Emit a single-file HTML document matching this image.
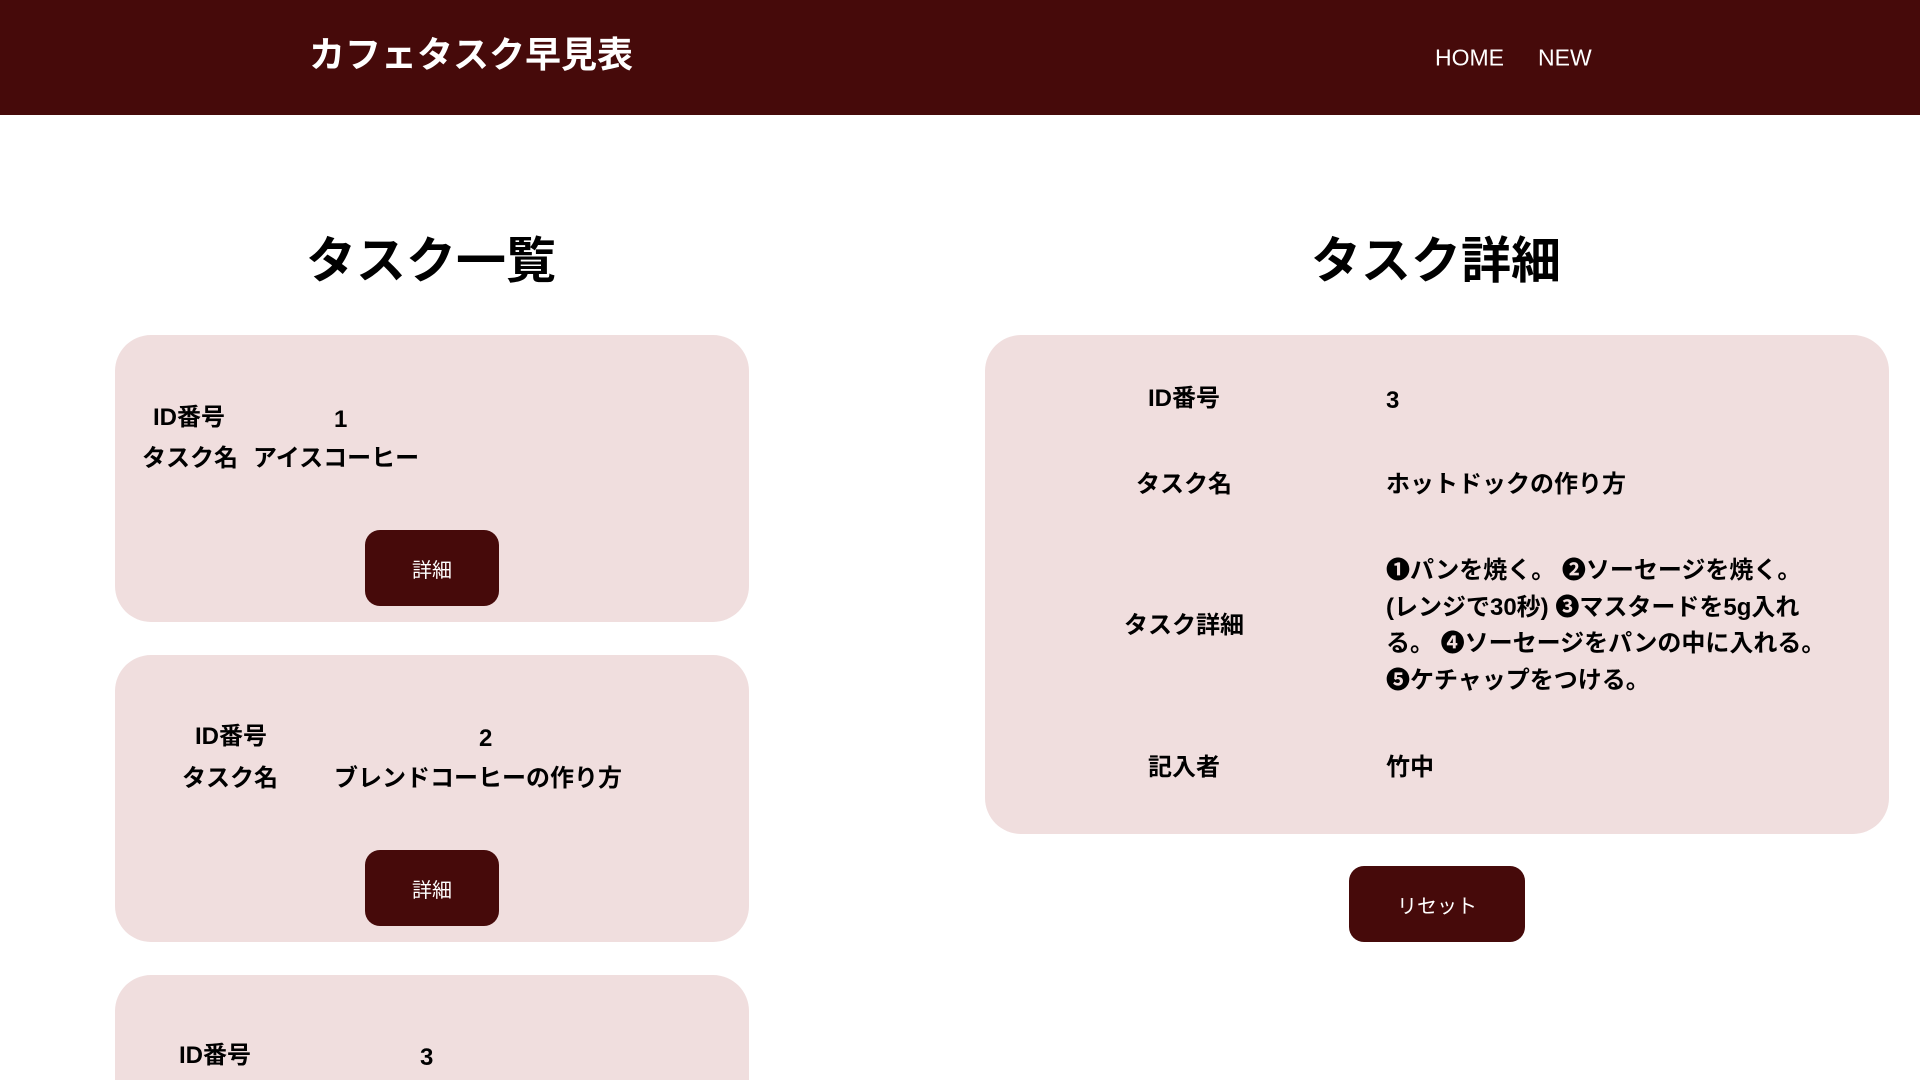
<!DOCTYPE html>
<html><head><meta charset="utf-8"><style>
*{margin:0;padding:0;box-sizing:border-box}
html,body{width:1920px;height:1080px;overflow:hidden}
body{background:#fff;font-family:"Liberation Sans","Noto Sans CJK JP",sans-serif;color:#000;position:relative}
.hdr{position:absolute;left:0;top:0;width:1920px;height:115px;background:#460a0a}
.t{position:absolute;white-space:nowrap;line-height:1}
.card{position:absolute;background:#f0dede;border-radius:36px}
.btn{position:absolute;background:#460a0a;border-radius:15px;color:#fff;font-size:20px;display:flex;align-items:center;justify-content:center}
.b{font-weight:bold;font-size:24px}
.c{transform:translate(-50%,-50%)}
.l{transform:translateY(-50%)}
</style></head><body>
<div class="hdr"></div>
<div class="t l" style="left:309px;top:55px;color:#fff;font-size:36px;font-weight:bold">カフェタスク早見表</div>
<div class="t l" style="left:1435px;top:58px;color:#fff;font-size:23px">HOME</div>
<div class="t l" style="left:1538px;top:58px;color:#fff;font-size:23px">NEW</div>

<div class="t c" style="left:431px;top:261px;font-size:50px;font-weight:bold">タスク一覧</div>
<div class="t c" style="left:1436px;top:261px;font-size:50px;font-weight:bold">タスク詳細</div>

<div class="card" style="left:115px;top:335px;width:634px;height:287px"></div>
<div class="t l b" style="left:153px;top:418px">ID番号</div>
<div class="t l b" style="left:334px;top:420px">1</div>
<div class="t l b" style="left:142px;top:459px">タスク名</div>
<div class="t l b" style="left:253px;top:459px">アイスコーヒー</div>
<div class="btn" style="left:365px;top:530px;width:134px;height:76px">詳細</div>

<div class="card" style="left:115px;top:655px;width:634px;height:287px"></div>
<div class="t l b" style="left:195px;top:737px">ID番号</div>
<div class="t l b" style="left:479px;top:739px">2</div>
<div class="t l b" style="left:182px;top:779px">タスク名</div>
<div class="t l b" style="left:334px;top:779px">ブレンドコーヒーの作り方</div>
<div class="btn" style="left:365px;top:850px;width:134px;height:76px">詳細</div>

<div class="card" style="left:115px;top:975px;width:634px;height:105px;border-radius:36px 36px 0 0"></div>
<div class="t l b" style="left:179px;top:1056px">ID番号</div>
<div class="t l b" style="left:420px;top:1058px">3</div>

<div class="card" style="left:985px;top:335px;width:904px;height:499px"></div>
<div class="t c b" style="left:1184px;top:399px">ID番号</div>
<div class="t l b" style="left:1386px;top:401px">3</div>
<div class="t c b" style="left:1184px;top:485px">タスク名</div>
<div class="t l b" style="left:1386px;top:485px">ホットドックの作り方</div>
<div class="t c b" style="left:1184px;top:626px">タスク詳細</div>
<div class="t b" style="left:1386px;top:553px;line-height:36.7px">❶パンを焼く。 ❷ソーセージを焼く。<br>(レンジで30秒) ❸マスタードを5g入れ<br>る。 ❹ソーセージをパンの中に入れる。<br>❺ケチャップをつける。</div>
<div class="t c b" style="left:1184px;top:768px">記入者</div>
<div class="t l b" style="left:1386px;top:768px">竹中</div>
<div class="btn" style="left:1349px;top:866px;width:176px;height:76px">リセット</div>
</body></html>
